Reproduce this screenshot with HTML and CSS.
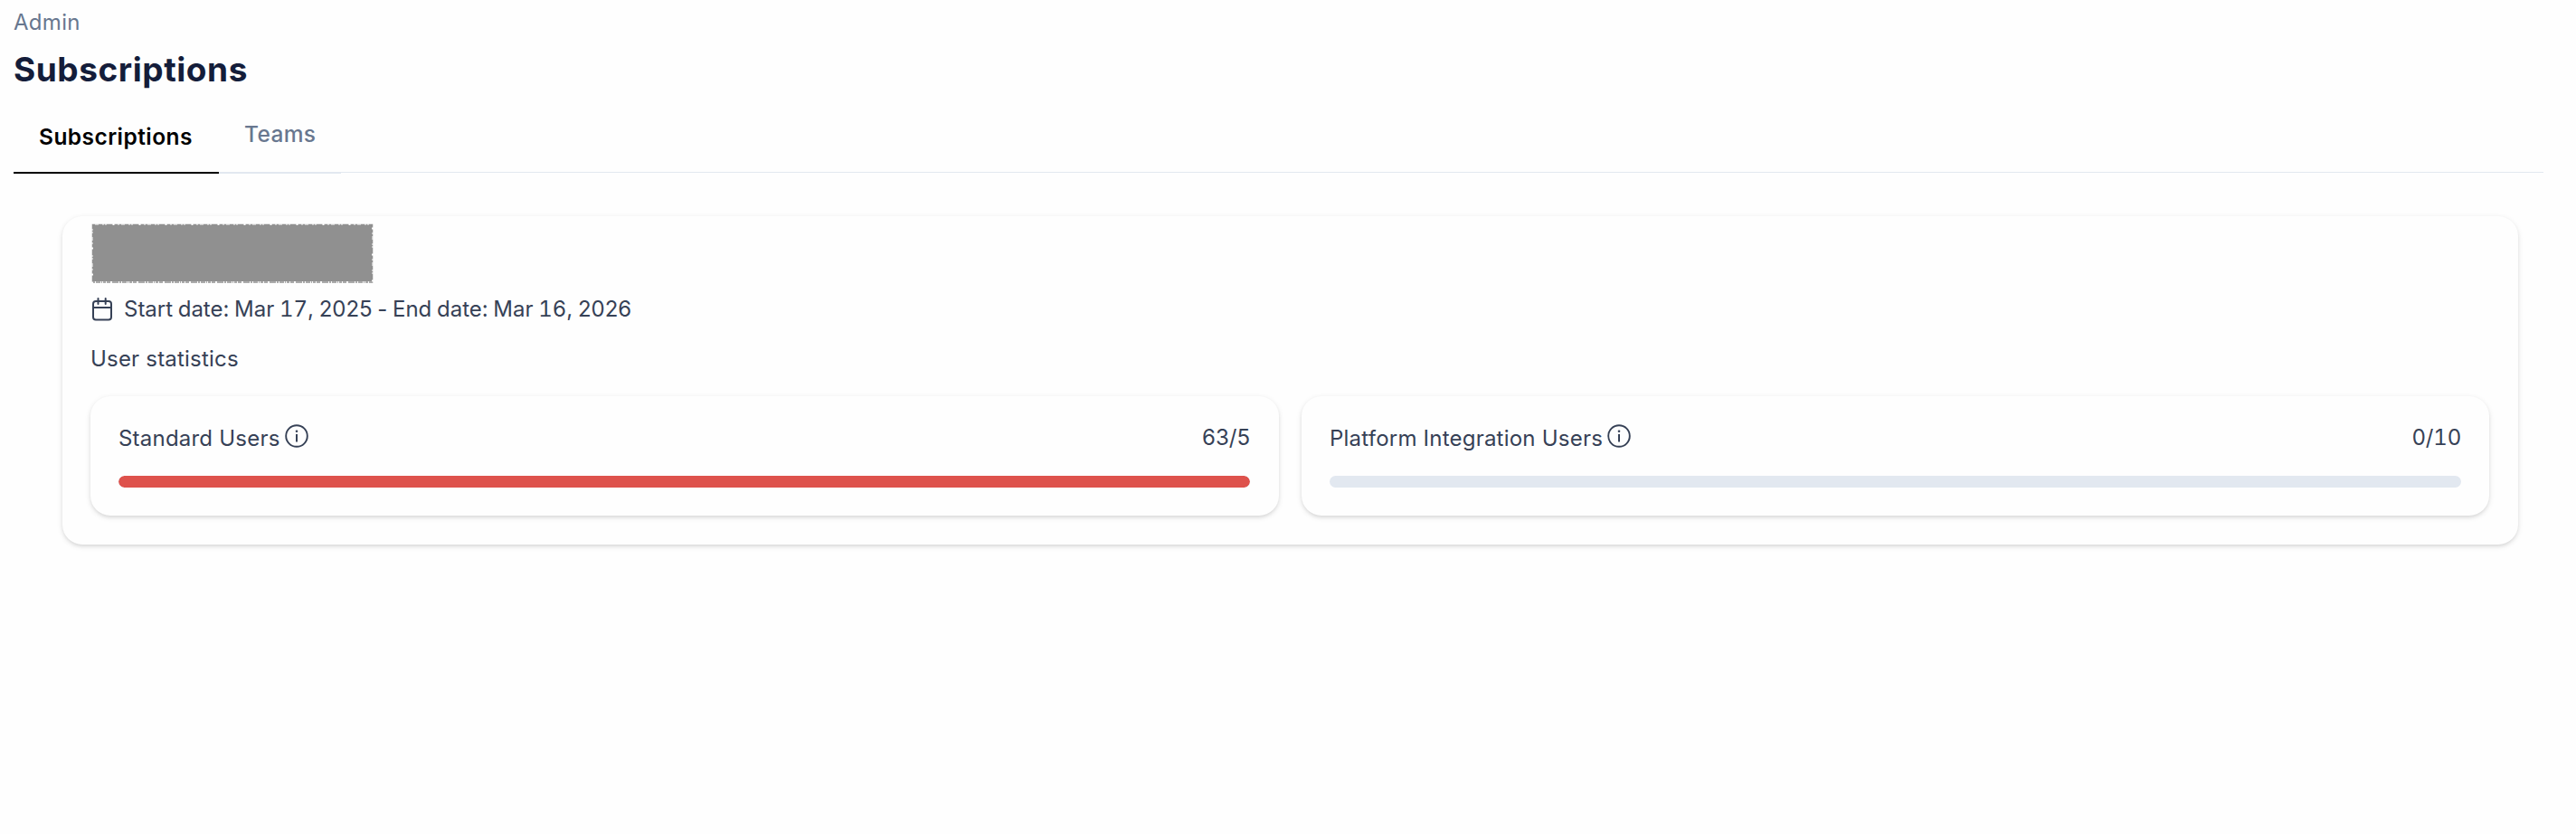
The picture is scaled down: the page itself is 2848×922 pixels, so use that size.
FILE: index.html
```
<!DOCTYPE html>
<html lang="en">
<head>
<meta charset="utf-8">
<title>Subscriptions</title>
<link rel="stylesheet" href="styles.css">
</head>
<body>
<header class="page-header">
  <div class="breadcrumb"><span>Admin</span></div>
  <h1 class="title"><span>Subscriptions</span></h1>
</header>
<nav class="tabs">
  <a class="tab tab-active"><span>Subscriptions</span></a>
  <a class="tab"><span>Teams</span></a>
</nav>
<main class="card">
  <svg class="redacted" width="312" height="68" viewBox="0 0 312 68">
    <rect x="2" y="2" width="308" height="62" fill="#909090"/>
    <rect x="1.500" y="1.500" width="309" height="63.500" fill="none" stroke="#909090" stroke-width="1.500" stroke-dasharray="3 1 1 1 5 1 2 1 7 2 4 1"/>
  </svg>
  <div class="dates">
    <svg class="calendar" width="24" height="27" viewBox="0 0 24 27" fill="none" stroke="#364156" stroke-width="2" stroke-linecap="round" stroke-linejoin="round">
      <rect x="2" y="5" width="20" height="20.500" rx="3"/>
      <path d="M2 12h20M7.500 2v6M15.700 2v6"/>
    </svg>
    <span class="date-text">Start date: Mar <span class="day">17</span>, 2025 - End date: Mar <span class="day">16</span>, 2026</span>
  </div>
  <div class="stats-title"><span>User statistics</span></div>
  <div class="stats">
    <section class="stat">
      <div class="stat-head">
        <span class="label">Standard Users</span>
        <svg class="info" width="26" height="26" viewBox="0 0 26 26"><circle cx="13" cy="13" r="11.800" fill="none" stroke="#364156" stroke-width="1.900"/><path d="M13 11v8.500" stroke="#364156" stroke-width="2"/><circle cx="13" cy="7.700" r="1.300" fill="#364156"/></svg>
        <span class="count count-used">63/5</span>
      </div>
      <div class="bar"><div class="fill" style="width:100%"></div></div>
    </section>
    <section class="stat">
      <div class="stat-head">
        <span class="label">Platform Integration Users</span>
        <svg class="info" width="26" height="26" viewBox="0 0 26 26"><circle cx="13" cy="13" r="11.800" fill="none" stroke="#364156" stroke-width="1.900"/><path d="M13 11v8.500" stroke="#364156" stroke-width="2"/><circle cx="13" cy="7.700" r="1.300" fill="#364156"/></svg>
        <span class="count">0/10</span>
      </div>
      <div class="bar"><div class="fill" style="width:0%"></div></div>
    </section>
  </div>
</main>
</body>
</html>
```
FILE: styles.css
```
* { box-sizing: border-box; }
body {
  margin: 0;
  min-height: 100vh;
  padding: 9px 36px 0 15px;
  background: #fefefe;
  color: #364156;
  font: 400 24px/32px Inter, "Liberation Sans", sans-serif;
  white-space: nowrap;
}
svg { display: block; flex: none; }
.breadcrumb { color: #68778f; letter-spacing: 0.3px; }
.title {
  margin: 14px 0 0;
  color: #141d3a;
  font-size: 37px;
  line-height: 44px;
  font-weight: 700;
  letter-spacing: 0.55px;
}
.tabs {
  display: flex;
  height: 93px;
  background: linear-gradient(#e2e8f0, #e2e8f0) 0 91px / 100% 1px no-repeat;
}
.tab {
  width: 135px;
  padding: 33px 0 0 28px;
  border-bottom: 2px solid #e2e8f0;
  color: #68778f;
  font-size: 24.5px;
  font-weight: 500;
  letter-spacing: 0.35px;
}
.tab-active {
  width: 227px;
  padding-top: 36px;
  border-color: #000;
  color: #000;
  font-weight: 600;
  letter-spacing: 0.45px;
}
.card {
  margin: 47px 28px 0 54px;
  height: 363px;
  padding: 8px 32px 0 31px;
  border-radius: 22px;
  background: #fefefe;
  box-shadow: 0 2px 6px rgba(0,0,0,.1), 0 2px 4px -1px rgba(0,0,0,.1);
}
.redacted { margin-left: 1px; }
.dates { display: flex; gap: 12px; margin-top: 11px; height: 32px; }
.date-text { letter-spacing: -0.02px; word-spacing: -1px; }
.day { font-variant-numeric: tabular-nums; }
.calendar { margin: 2px 0 0 1px; }
.stats-title { margin-top: 23px; height: 32px; letter-spacing: 0.2px; }
.stats { display: grid; grid-template-columns: 1314px 1313px; gap: 25px; margin-top: 25px; }
.stat {
  height: 132px;
  padding: 31px 31px 0;
  border-radius: 22px;
  background: #fefefe;
  box-shadow: 0 2px 6px rgba(0,0,0,.1), 0 2px 4px -1px rgba(0,0,0,.1);
}
.stat:first-child { padding-right: 32px; }
.label { letter-spacing: 0.22px; }
.stat-head { display: flex; height: 32px; }
.info { margin: 0 0 0 5px; }
.count { margin: -1px 0 0 auto; font-variant-numeric: tabular-nums; letter-spacing: -0.2px; }
.count-used { font-variant-numeric: normal; letter-spacing: 0; }
.bar { height: 13px; margin-top: 25px; border-radius: 7px; background: #e2e8f0; overflow: hidden; }
.fill { height: 100%; border-radius: 7px; background: #de524c; }
```
